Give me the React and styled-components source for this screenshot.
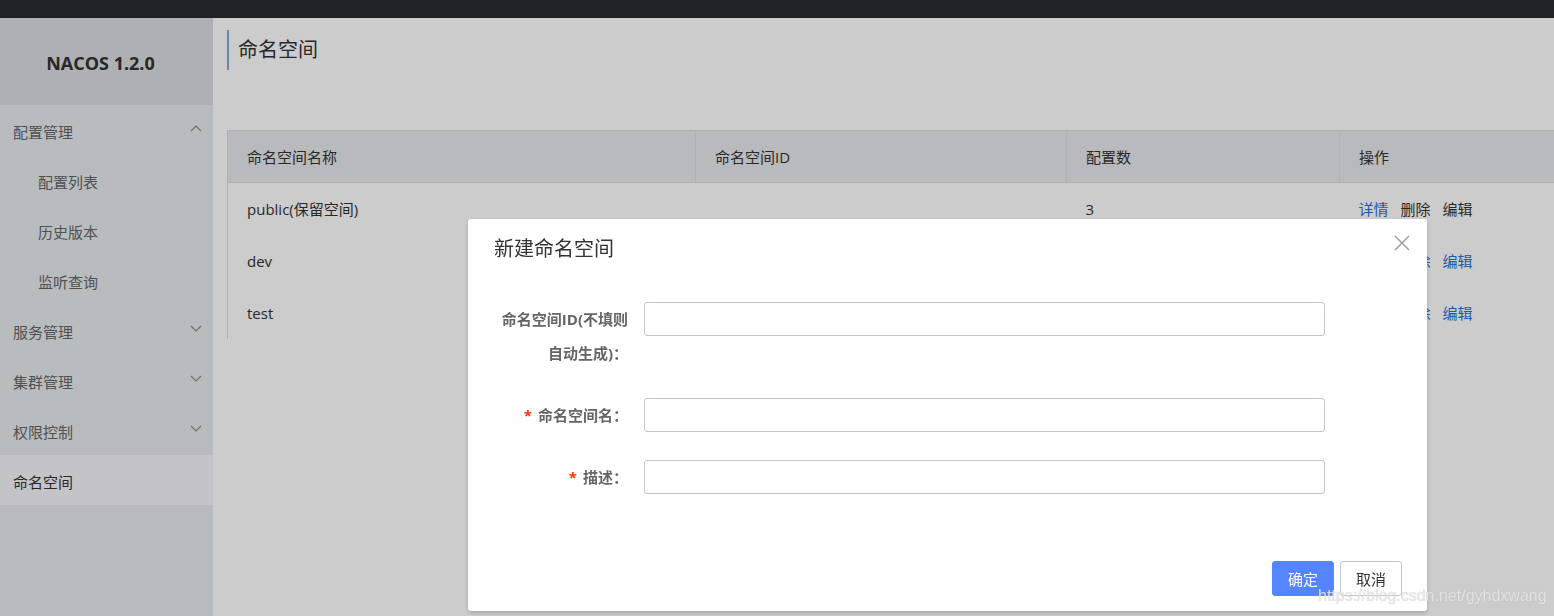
import styled, { createGlobalStyle } from "styled-components";

const Global = createGlobalStyle`
  html, body {
    margin: 0;
    padding: 0;
    overflow: hidden;
    background: #fff;
    font-family: "Open Sans", "Noto Sans CJK SC", sans-serif;
    font-size: 15px;
    color: #333;
  }
  * { box-sizing: border-box; }
`;

const menu = [
  { label: "配置管理", open: true, children: ["配置列表", "历史版本", "监听查询"] },
  { label: "服务管理", open: false },
  { label: "集群管理", open: false },
  { label: "权限控制", open: false },
  { label: "命名空间", active: true },
];

const rows = [
  { name: "public(保留空间)", id: "", count: "3", locked: true },
  { name: "dev", id: "", count: "" },
  { name: "test", id: "", count: "" },
];

const Chevron = ({ up }) => (
  <svg width="12" height="7" viewBox="0 0 12 7">
    <polyline
      points={up ? "1,6 6,1 11,6" : "1,1 6,6 11,1"}
      fill="none"
      stroke="#888"
      strokeWidth="1.1"
    />
  </svg>
);

const App = () => {
  return (
    <Page>
      <Global />
      <TopBar />
      <Body>
        <Sidebar>
          <Logo>NACOS 1.2.0</Logo>
          {menu.map((item) => (
            <div key={item.label}>
              <MenuItem active={item.active}>
                <span>{item.label}</span>
                {item.open !== undefined && <Chevron up={item.open} />}
              </MenuItem>
              {item.children &&
                item.children.map((c) => <SubItem key={c}>{c}</SubItem>)}
            </div>
          ))}
        </Sidebar>

        <Main>
          <PageTitle>命名空间</PageTitle>
          <Table>
            <colgroup>
              <col style={{ width: 468 }} />
              <col style={{ width: 371 }} />
              <col style={{ width: 273 }} />
              <col style={{ width: 330 }} />
            </colgroup>
            <thead>
              <tr>
                <Th>命名空间名称</Th>
                <Th>命名空间ID</Th>
                <Th>配置数</Th>
                <Th>操作</Th>
              </tr>
            </thead>
            <tbody>
              {rows.map((r) => (
                <tr key={r.name}>
                  <Td>{r.name}</Td>
                  <Td>{r.id}</Td>
                  <Td>{r.count}</Td>
                  <Td>
                    <OpLink>详情</OpLink>
                    <OpLink muted={r.locked}>删除</OpLink>
                    <OpLink muted={r.locked}>编辑</OpLink>
                  </Td>
                </tr>
              ))}
            </tbody>
          </Table>
        </Main>
      </Body>

      <Mask />

      <Dialog>
        <DialogTitle>新建命名空间</DialogTitle>
        <CloseBtn>
          <svg width="16" height="16" viewBox="0 0 16 16">
            <path d="M1 1 L15 15 M15 1 L1 15" stroke="#999" strokeWidth="1.4" fill="none" />
          </svg>
        </CloseBtn>
        <Form>
          <FormRow>
            <Label>
              命名空间ID(不填则
              <br />
              自动生成)：
            </Label>
            <Input />
          </FormRow>
          <FormRow>
            <Label>
              <Star>*</Star>命名空间名：
            </Label>
            <Input />
          </FormRow>
          <FormRow>
            <Label>
              <Star>*</Star>描述：
            </Label>
            <Input />
          </FormRow>
        </Form>
        <Footer>
          <Button primary>确定</Button>
          <Button>取消</Button>
        </Footer>
      </Dialog>

      <Watermark>https://blog.csdn.net/gyhdxwang</Watermark>
    </Page>
  );
};

export default App;

const Page = styled.div`
  position: relative;
  width: 100vw;
  height: 100vh;
  overflow: hidden;
`;

const TopBar = styled.div`
  height: 18px;
  background: #272a2f;
`;

const Body = styled.div`
  display: flex;
  height: calc(100vh - 18px);
`;

const Sidebar = styled.div`
  width: 213px;
  flex-shrink: 0;
  background: #e7ebef;
`;

const Logo = styled.div`
  height: 87px;
  display: flex;
  align-items: center;
  justify-content: center;
  padding: 2px 12px 0 0;
  background: #dadce0;
  font-family: "Open Sans", "Noto Sans", sans-serif;
  font-weight: 700;
  font-size: 18px;
  color: #333;
`;

const MenuItem = styled.div`
  height: 50px;
  display: flex;
  align-items: center;
  justify-content: space-between;
  padding: 3px 11px 0 13px;
  font-size: 15px;
  color: ${(p) => (p.active ? "#333" : "#666")};
  background: ${(p) => (p.active ? "#f5f4f9" : "transparent")};

  svg {
    margin-top: -6px;
  }
`;

const SubItem = styled.div`
  height: 50px;
  display: flex;
  align-items: center;
  padding: 2px 0 0 38px;
  font-size: 15px;
  color: #666;
`;

const Main = styled.div`
  flex: 1;
  min-width: 0;
  overflow: hidden;
  padding: 12px 0 0 14px;
`;

const PageTitle = styled.div`
  height: 40px;
  line-height: 40px;
  border-left: 2px solid #83a9d6;
  padding-left: 9px;
  font-size: 20px;
  color: #333;
  margin-bottom: 60px;
`;

const Table = styled.table`
  width: 1442px;
  table-layout: fixed;
  border-collapse: collapse;
  border-left: 1px solid #dcdee3;
  border-top: 1px solid #dcdee3;
`;

const Th = styled.th`
  height: 52px;
  padding: 0 20px 0 19px;
  text-align: left;
  font-weight: 400;
  font-size: 15px;
  color: #333;
  background: #e8e9ed;
  border-right: 1px solid #dcdee3;
  border-bottom: 1px solid #dcdee3;
`;

const Td = styled.td`
  height: 52px;
  padding: 0 20px 0 19px;
  font-size: 15px;
  color: #333;
  white-space: nowrap;
`;

const OpLink = styled.span`
  margin-right: 12px;
  color: ${(p) => (p.muted ? "#333" : "#2270dc")};
`;

const Mask = styled.div`
  position: fixed;
  inset: 0;
  background: rgba(0, 0, 0, 0.2);
`;

const Dialog = styled.div`
  position: fixed;
  left: 468px;
  top: 219px;
  width: 959px;
  height: 392px;
  display: flex;
  flex-direction: column;
  background: #fff;
  border-radius: 3px;
  box-shadow: 0 2px 4px rgba(0, 0, 0, 0.18);
`;

const DialogTitle = styled.div`
  padding: 17px 26px 0;
  line-height: 26px;
  font-size: 20px;
  color: #333;
`;

const CloseBtn = styled.div`
  position: absolute;
  top: 16px;
  right: 17px;
  width: 16px;
  height: 16px;
  display: flex;
`;

const Form = styled.div`
  display: flex;
  flex-direction: column;
  gap: 28px;
  padding: 40px 26px 0;
`;

const FormRow = styled.div`
  display: flex;
  align-items: flex-start;
`;

const Label = styled.div`
  width: 150px;
  flex-shrink: 0;
  padding-right: 16px;
  text-align: right;
  line-height: 34px;
  font-size: 15px;
  font-weight: 700;
  color: #666;
`;

const Star = styled.span`
  color: #ff3000;
  margin-right: 6px;
`;

const Input = styled.input`
  width: 681px;
  height: 34px;
  border: 1px solid #c4c6cf;
  border-radius: 3px;
  outline: none;
  background: #fff;
`;

const Footer = styled.div`
  margin-top: auto;
  display: flex;
  justify-content: flex-end;
  gap: 6px;
  padding: 0 25px 15px;
`;

const Button = styled.button`
  width: 62px;
  height: 35px;
  border-radius: 3px;
  font-family: "Open Sans", "Noto Sans CJK SC", sans-serif;
  font-size: 15px;
  border: 1px solid ${(p) => (p.primary ? "#5584ff" : "#c4c6cf")};
  background: ${(p) => (p.primary ? "#5584ff" : "#fff")};
  color: ${(p) => (p.primary ? "#fff" : "#333")};
  padding: 0;
`;

const Watermark = styled.div`
  position: fixed;
  left: 1318px;
  top: 587px;
  font-family: "Liberation Sans", Arial, sans-serif;
  font-size: 16px;
  color: rgba(235, 235, 235, 0.85);
  text-shadow: 0 0 1px rgba(150, 150, 150, 0.5);
  pointer-events: none;
`;
